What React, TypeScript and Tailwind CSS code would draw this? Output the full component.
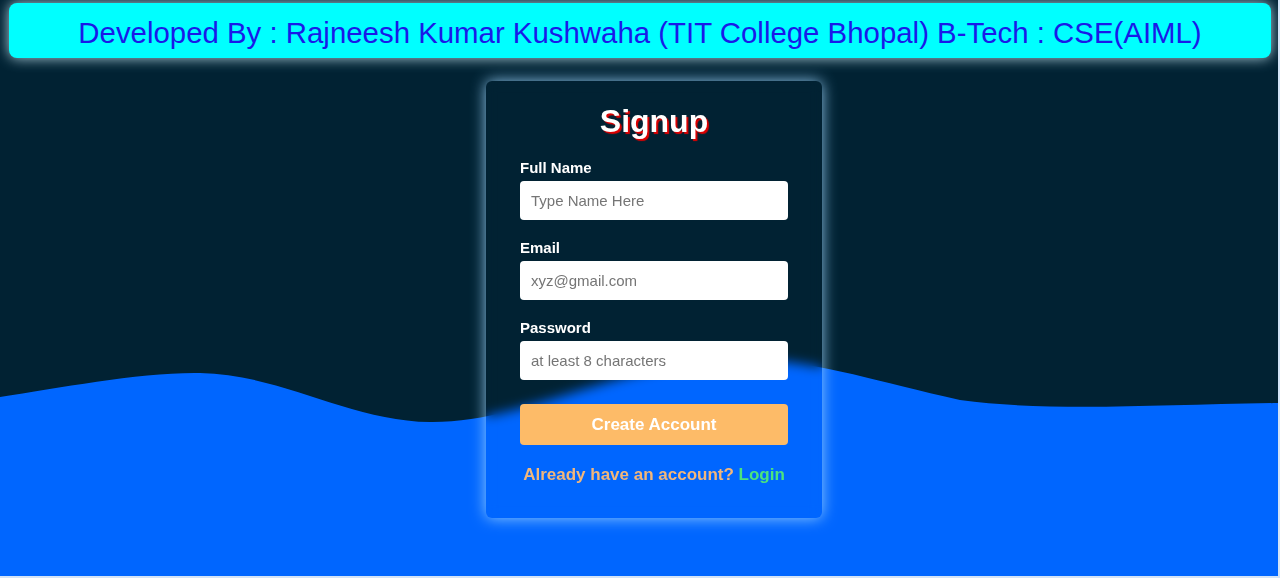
import React, { useState } from 'react';

const Field = ({
  label,
  type,
  placeholder,
  value,
  onChange,
}: {
  label: string;
  type: string;
  placeholder: string;
  value: string;
  onChange: (v: string) => void;
}) => (
  <div className="flex flex-col">
    <label className="text-[15px] leading-[18px] font-bold text-white mb-[4px]">{label}</label>
    <input
      type={type}
      placeholder={placeholder}
      value={value}
      onChange={(e) => onChange(e.target.value)}
      className="h-[39px] w-full rounded-[4px] bg-white px-[11px] text-[15px] text-black placeholder:text-[#757575] outline-none"
    />
  </div>
);

export default function App() {
  const [name, setName] = useState('');
  const [email, setEmail] = useState('');
  const [password, setPassword] = useState('');

  return (
    <div className="w-[1280px] h-[578px] overflow-hidden bg-[#d3e4f7] font-['Liberation_Sans',Arial,sans-serif]">
      <div className="relative w-[1278px] h-[576px] overflow-hidden bg-[#012233]">
        {/* wave background */}
        <svg
          className="absolute inset-0 w-full h-full"
          viewBox="0 0 1278 576"
          preserveAspectRatio="none"
        >
          <path
            d="M0,397 C60,388 140,372 200,373 C280,374 350,421 430,422 C520,423 610,368 720,360 C800,355 860,378 960,400 C1050,412 1150,405 1278,403 L1278,576 L0,576 Z"
            fill="#0066ff"
          />
        </svg>

        <div className="relative flex flex-col pt-[3px]">
          {/* header banner */}
          <div className="ml-[9px] mr-[7px] h-[55px] pt-[4px] rounded-lg bg-[#00ffff] flex items-center justify-center shadow-[0_0_14px_rgba(210,245,255,0.85)]">
            <h1 className="text-[29.4px] text-[#1a1ae8] leading-none">
              Developed By : Rajneesh Kumar Kushwaha (TIT College Bhopal) B-Tech : CSE(AIML)
            </h1>
          </div>

          {/* signup card */}
          <div className="ml-[486px] mt-[23px] w-[336px] h-[437px] rounded-[6px] px-[34px] pt-[20px] backdrop-blur-[6px] shadow-[0_0_15px_rgba(160,215,255,0.9)] flex flex-col">
            <h2 className="text-center text-[32px] leading-[40px] font-bold text-white [text-shadow:2px_2px_1px_#e00000]">
              Signup
            </h2>

            <div className="mt-[18px] flex flex-col gap-[19px]">
              <Field label="Full Name" type="text" placeholder="Type Name Here" value={name} onChange={setName} />
              <Field label="Email" type="email" placeholder="xyz@gmail.com" value={email} onChange={setEmail} />
              <Field label="Password" type="password" placeholder="at least 8 characters" value={password} onChange={setPassword} />
            </div>

            <button className="mt-[24px] h-[41px] w-full rounded-[4px] bg-[#fdbb68] text-[17px] font-bold text-white">
              Create Account
            </button>

            <p className="mt-[20px] text-center text-[17px] leading-[20px] font-bold text-[#f2b77b]">
              Already have an account? <a className="text-[#4be37f] cursor-pointer">Login</a>
            </p>
          </div>
        </div>
      </div>
    </div>
  );
}
